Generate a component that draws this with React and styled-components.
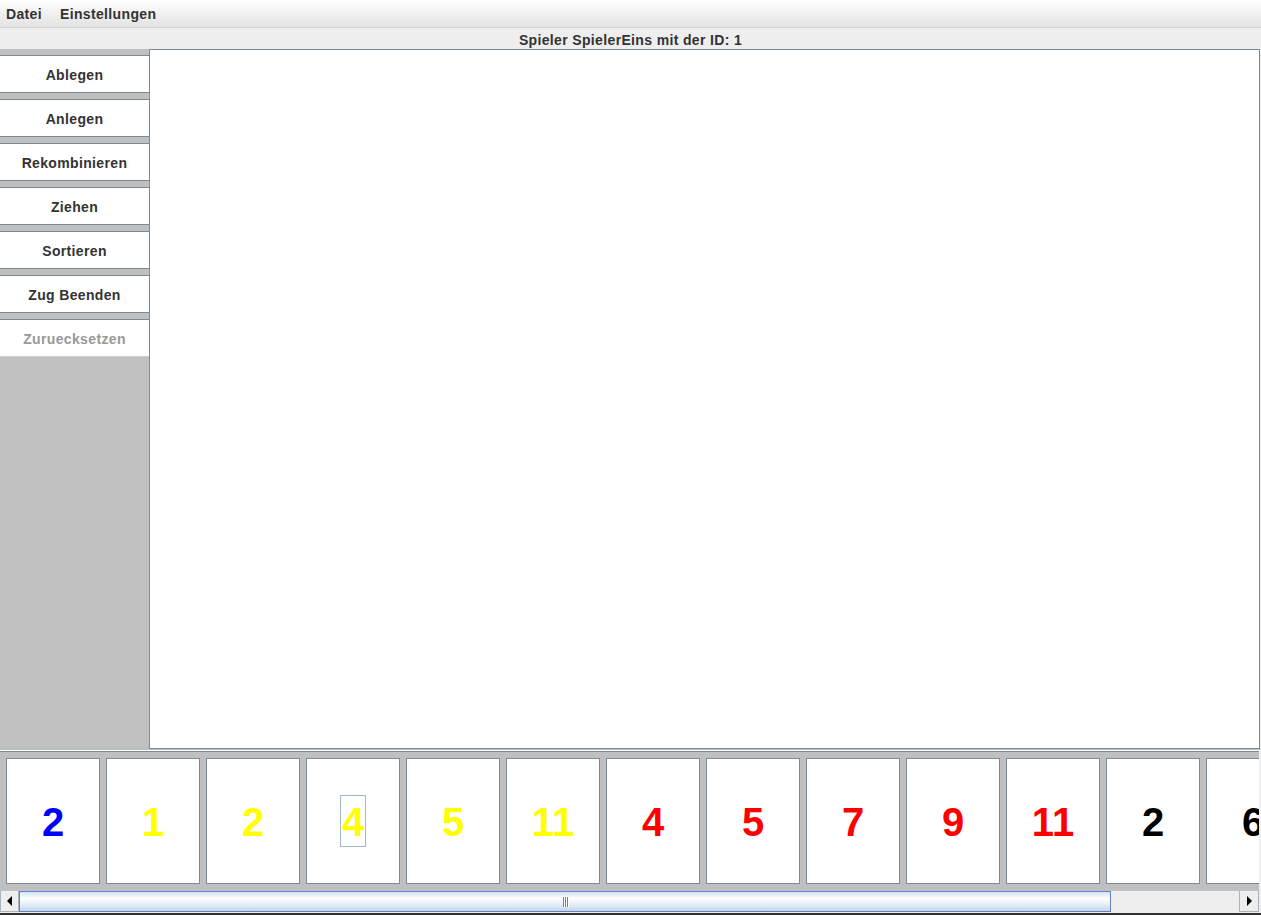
import React from 'react';
import styled, {createGlobalStyle} from 'styled-components';

const GlobalStyle = createGlobalStyle`
  html, body {
    margin: 0;
    padding: 0;
    background: #eeeeee;
    overflow: hidden;
  }
  body {
    font-family: "Liberation Sans", Arial, sans-serif;
  }
`;

const Frame = styled.div`
  width: 1261px;
  height: 915px;
  display: flex;
  flex-direction: column;
  background: #eeeeee;
  box-sizing: border-box;
  border-bottom: 2px solid #333333;
`;

const MenuBar = styled.div`
  height: 28px;
  box-sizing: border-box;
  display: flex;
  align-items: center;
  padding: 1px 0 0 0;
  background: linear-gradient(#ffffff 0%, #f2f2f2 45%, #e2e2e2 100%);
  border-bottom: 1px solid #d2d2d2;
`;

const MenuItem = styled.span`
  font-size: 14px;
  font-weight: bold;
  letter-spacing: 0.35px;
  color: #333333;
  padding: 0 9px 0 6px;
  margin-right: 3px;
`;

const TitleBar = styled.div`
  height: 21px;
  display: flex;
  align-items: center;
  justify-content: center;
  font-size: 14px;
  font-weight: bold;
  letter-spacing: 0.35px;
  color: #333333;
  padding-top: 2px;
  box-sizing: border-box;
`;

const Middle = styled.div`
  height: 700px;
  display: flex;
`;

const SidePanel = styled.div`
  width: 149px;
  background: #c0c0c0;
  padding-top: 6px;
  display: flex;
  flex-direction: column;
  gap: 6px;
`;

const ActionButton = styled.div`
  height: 38px;
  box-sizing: border-box;
  padding-top: 2px;
  background: #ffffff;
  border-top: 1px solid #7a8a99;
  border-bottom: 1px solid ${p => (p.$disabled ? '#d0d0d0' : '#7a8a99')};
  display: flex;
  align-items: center;
  justify-content: center;
  font-size: 14px;
  font-weight: bold;
  letter-spacing: 0.35px;
  color: ${p => (p.$disabled ? '#999999' : '#333333')};
`;

const Board = styled.div`
  flex: 1;
  background: #ffffff;
  border: 1px solid #7a8a99;
  margin-right: 1px;
`;

const Separator = styled.div`
  height: 0;
  border-top: 1px solid #c0c0c0;
  border-bottom: 1px solid #ffffff;
`;

const HandPanel = styled.div`
  height: 139px;
  box-sizing: border-box;
  background: #c0c0c0;
  border-top: 1px solid #7a8a99;
  padding: 6px 0 0 6px;
  display: flex;
  gap: 6px;
  overflow: hidden;
  margin-right: 2px;
`;

const Card = styled.div`
  flex: none;
  width: 94px;
  height: 126px;
  box-sizing: border-box;
  background: #ffffff;
  border: 1px solid #7a8a99;
  display: flex;
  align-items: center;
  justify-content: center;
`;

const CardNumber = styled.span`
  font-size: 40px;
  font-weight: bold;
  line-height: 47px;
  padding: 3px 1px 0;
  border: 1px solid ${p => (p.$focused ? '#a3b8cc' : 'transparent')};
  color: ${p => p.$color};
`;

const ScrollBar = styled.div`
  height: 22px;
  box-sizing: border-box;
  display: flex;
  background: #eeeeee;
  border-top: 1px solid #b8c4d0;
  margin-right: 2px;
`;

const ArrowButton = styled.div`
  width: ${p => p.$w}px;
  flex: none;
  box-sizing: border-box;
  background: #eeeeee;
  border: 1px solid #a8b4c0;
  border-top: none;
  display: flex;
  align-items: center;
  justify-content: center;
  &::after {
    content: '';
    width: 0;
    height: 0;
    border-top: 5px solid transparent;
    border-bottom: 5px solid transparent;
    ${p => (p.$dir === 'left' ? 'border-right: 5px solid #000;' : 'border-left: 5px solid #000;')}
  }
`;

const Thumb = styled.div`
  width: 1092px;
  flex: none;
  box-sizing: border-box;
  border: 1px solid #6382bf;
  background: linear-gradient(#d5e2f2 0%, #ffffff 35%, #e9f0f9 60%, #c4d5ec 100%);
  display: flex;
  align-items: center;
  justify-content: center;
  gap: 1px;
`;

const Grip = styled.span`
  width: 1px;
  height: 10px;
  background: #6382bf;
  box-shadow: 1px 0 0 #ffffff;
`;

const Track = styled.div`
  flex: 1;
  background: #eeeeee;
`;

const actions = [
  'Ablegen',
  'Anlegen',
  'Rekombinieren',
  'Ziehen',
  'Sortieren',
  'Zug Beenden',
];

const hand = [
  {n: 2, c: '#0000ff'},
  {n: 1, c: '#ffff00'},
  {n: 2, c: '#ffff00'},
  {n: 4, c: '#ffff00', focus: true},
  {n: 5, c: '#ffff00'},
  {n: 11, c: '#ffff00'},
  {n: 4, c: '#ff0000'},
  {n: 5, c: '#ff0000'},
  {n: 7, c: '#ff0000'},
  {n: 9, c: '#ff0000'},
  {n: 11, c: '#ff0000'},
  {n: 2, c: '#000000'},
  {n: 6, c: '#000000'},
];

const App = () => (
  <>
    <GlobalStyle />
    <Frame>
      <MenuBar>
        <MenuItem>Datei</MenuItem>
        <MenuItem>Einstellungen</MenuItem>
      </MenuBar>
      <TitleBar>Spieler SpielerEins mit der ID: 1</TitleBar>
      <Middle>
        <SidePanel>
          {actions.map(a => (
            <ActionButton key={a}>{a}</ActionButton>
          ))}
          <ActionButton $disabled>Zuruecksetzen</ActionButton>
        </SidePanel>
        <Board />
      </Middle>
      <Separator />
      <HandPanel>
        {hand.map((card, i) => (
          <Card key={i}>
            <CardNumber $color={card.c} $focused={card.focus}>
              {card.n}
            </CardNumber>
          </Card>
        ))}
      </HandPanel>
      <ScrollBar>
        <ArrowButton $w={19} $dir="left" />
        <Thumb>
          <Grip />
          <Grip />
          <Grip />
        </Thumb>
        <Track />
        <ArrowButton $w={20} $dir="right" />
      </ScrollBar>
    </Frame>
  </>
);

export default App;
